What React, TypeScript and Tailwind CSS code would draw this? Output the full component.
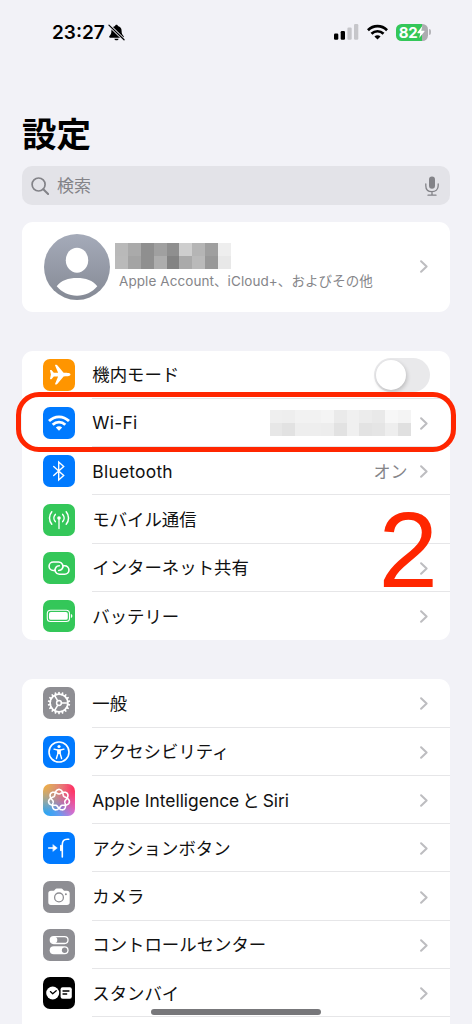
import type { ReactNode } from "react";

const Chevron = () => (
  <svg viewBox="0 0 8 13" className="h-[13px] w-[8px] shrink-0" fill="none" stroke="#bdbdc0" strokeWidth="2" strokeLinecap="round" strokeLinejoin="round">
    <path d="M1.1 1.2 6.6 6.5 1.1 11.8" />
  </svg>
);

const WifiGlyph = ({ className, fill }: { className: string; fill: string }) => (
  <svg viewBox="0 0 22 16" className={className} fill="none" stroke={fill} strokeWidth="2.8">
    <path d="M1 6.1C6.7.4 15.3.4 21 6.1" />
    <path d="M4.7 9.8c3.6-3.5 9-3.5 12.6 0" />
    <path d="M11 15.8 7.8 12.6c1.8-1.7 4.600-1.700 6.400 0Z" fill={fill} stroke="none" />
  </svg>
);

const Tile = ({ color, children }: { color: string; children: ReactNode }) => (
  <div className={`flex size-8 shrink-0 items-center justify-center overflow-hidden rounded-[7px] ${color}`}>{children}</div>
);

const Glyph = ({ children }: { children: ReactNode }) => (
  <svg viewBox="0 0 32 32" className="size-8" fill="none" stroke="white" strokeLinecap="round" strokeLinejoin="round">
    {children}
  </svg>
);

const AirplaneIcon = () => (
  <Tile color="bg-[#ff9500]">
    <Glyph>
      <path
        fill="white"
        stroke="none"
        d="M25.7 14.1c1 .3 1.8.8 1.8 1.5s-.8 1.2-1.8 1.5c-.9.2-2.9.3-5.1.3l-6.1 7.4c-.3.4-.7.6-1.2.6h-.8c-.4 0-.6-.3-.4-.7l3-7.3h-4.3l-2.1 2.5c-.2.3-.5.4-.9.4H7.4c-.3 0-.5-.2-.4-.5l.9-4.2L7 11.4c-.1-.3.1-.5.4-.5h.4c.4 0 .7.1.9.4l2.1 2.5h4.3l-3-7.3c-.2-.4 0-.7.4-.7h.8c.5 0 .9.2 1.2.6l6.1 7.4c2.2 0 4.2.1 5.1.3Z"
      />
    </Glyph>
  </Tile>
);

const WifiIcon = () => (
  <Tile color="bg-[#007aff]">
    <WifiGlyph className="h-[16px] w-[22px]" fill="white" />
  </Tile>
);

const BluetoothIcon = () => (
  <Tile color="bg-[#007aff]">
    <Glyph>
      <path strokeWidth="1.4" strokeLinejoin="miter" d="m10.7 11.4 10 9.2-5 4.4V7l5 4.4-10 9.200" />
    </Glyph>
  </Tile>
);

const AntennaIcon = () => (
  <Tile color="bg-[#34c759]">
    <Glyph>
      <circle cx="16" cy="14" r="1.8" fill="white" stroke="none" />
      <path strokeWidth="1.3" d="M16 15v9.6" />
      <path strokeWidth="1.5" d="M12.3 10.4a5.4 5.4 0 0 0 0 7.2M19.7 10.4a5.4 5.4 0 0 1 0 7.2M8.8 7.7a9.7 9.7 0 0 0 0 12.6M23.2 7.7a9.7 9.7 0 0 1 0 12.6" />
    </Glyph>
  </Tile>
);

const LinkIcon = () => (
  <Tile color="bg-[#34c759]">
    <Glyph>
      <path strokeWidth="1.6" d="M12.1 18.5H10.300a4.25 4.25 0 0 1 0-8.5h5.4a4.25 4.25 0 0 1 3.5 6.7c-.8 1.200-2 1.800-3.500 1.800" />
      <path strokeWidth="1.6" d="M19.9 13.7h1.8a4.25 4.25 0 0 1 0 8.5h-5.4a4.25 4.25 0 0 1-3.5-6.7c.8-1.200 2-1.800 3.500-1.800" />
    </Glyph>
  </Tile>
);

const BatteryIcon = () => (
  <Tile color="bg-[#34c759]">
    <Glyph>
      <rect x="4.3" y="10.3" width="22.2" height="11.2" rx="3.3" strokeWidth="1.1" />
      <rect x="6" y="12" width="18.8" height="7.8" rx="1.9" fill="white" stroke="none" />
      <path d="M27.900 13.900c1.900.5 1.900 3.500 0 4Z" fill="white" stroke="none" />
    </Glyph>
  </Tile>
);

const GEAR_ANGLES = Array.from({ length: 18 }, (_, i) => i * 20);

const GearIcon = () => (
  <Tile color="bg-[#8e8e93]">
    <Glyph>
      <circle cx="16" cy="16" r="8.9" strokeWidth="1.7" />
      {GEAR_ANGLES.map((a) => (
        <path key={a} d="M16 7.200V5.500" strokeWidth="1.7" transform={`rotate(${a} 16 16)`} />
      ))}
      <circle cx="16" cy="16" r="2.4" strokeWidth="1.5" />
      <path strokeWidth="1.5" d="M18.4 16h6.2M14.8 13.900l-3.200-5.400M14.800 18.100l-3.200 5.400" />
    </Glyph>
  </Tile>
);

const AccessibilityIcon = () => (
  <Tile color="bg-[#007aff]">
    <Glyph>
      <circle cx="16" cy="16" r="10" strokeWidth="1.6" />
      <circle cx="16" cy="10.5" r="1.6" fill="white" stroke="none" />
      <path strokeWidth="1.4" d="m11 13.1 3.600.9h2.800l3.600-.9" />
      <path strokeWidth="1.4" d="M14.900 14v3.500l-1.500 5M17.100 14v3.500l1.500 5" />
      <path d="M14.500 14h3v4h-3Z" fill="white" stroke="none" />
    </Glyph>
  </Tile>
);

// Closed seven-lobed knot that winds twice round the centre.
const KNOT_POINTS = Array.from({ length: 224 }, (_, i) => {
  const t = (i / 224) * Math.PI * 4;
  const r = 8.3 + 2.3 * Math.cos(3.5 * t);
  return `${(16 + r * Math.sin(t)).toFixed(2)},${(16 - r * Math.cos(t)).toFixed(2)}`;
}).join(" ");

const IntelligenceIcon = () => (
  <Tile color="bg-[radial-gradient(circle_at_0%_0%,#ffac33_0%,#ffac3300_65%),radial-gradient(circle_at_100%_15%,#ff3158_0%,#ff315800_72%),radial-gradient(circle_at_0%_90%,#27a5f5_0%,#27a5f500_80%),linear-gradient(90deg,#7aa7e8,#e477ee)]">
    <Glyph>
      <polygon points={KNOT_POINTS} strokeWidth="1.6" />
    </Glyph>
  </Tile>
);

const ActionButtonIcon = () => (
  <Tile color="bg-[#007aff]">
    <Glyph>
      <path strokeWidth="1.6" d="M5.700 16h5" />
      <path d="m10.100 12.800 4.200 3.200-4.200 3.200Z" fill="white" strokeWidth=".5" />
      <path strokeWidth="1.6" d="M19.300 25V12.400c0-3.400 1.500-5.200 4.900-5.200h1.600" />
      <path strokeWidth="1.900" d="M18 13.800v4.400" />
    </Glyph>
  </Tile>
);

const CameraIcon = () => (
  <Tile color="bg-[#8e8e93]">
    <Glyph>
      <path
        fill="white"
        stroke="none"
        d="M8 9.700h2.600c.5 0 .8-.2 1.100-.6l.6-.8c.4-.5.8-.7 1.400-.7h4.600c.6 0 1 .2 1.400.7l.6.8c.3.4.6.6 1.100.6H24c1.700 0 2.700 1 2.700 2.700v8.900c0 1.700-1 2.700-2.700 2.700H8c-1.700 0-2.700-1-2.700-2.700v-8.900c0-1.700 1-2.700 2.700-2.700Z"
      />
      <circle cx="16" cy="16.400" r="4.400" stroke="#8e8e93" strokeWidth="1.300" />
      <circle cx="22.900" cy="13.200" r="1" fill="#8e8e93" stroke="none" />
    </Glyph>
  </Tile>
);

const ControlCenterIcon = () => (
  <Tile color="bg-[#8e8e93]">
    <Glyph>
      <rect x="7.300" y="7.600" width="17.700" height="6.900" rx="3.450" strokeWidth="1.300" />
      <circle cx="11" cy="11.050" r="3.300" fill="white" stroke="none" />
      <rect x="6.700" y="17.200" width="18.900" height="8.100" rx="4.050" fill="white" stroke="none" />
      <circle cx="21.600" cy="21.250" r="2.700" fill="#8e8e93" stroke="none" />
    </Glyph>
  </Tile>
);

const StandbyIcon = () => (
  <Tile color="bg-black">
    <Glyph>
      <circle cx="9.700" cy="16" r="6.500" fill="white" stroke="none" />
      <path d="m7.400 14.600 2.300 2.100 3.500-3" stroke="black" strokeWidth="1.300" />
      <rect x="17.600" y="10.300" width="11.200" height="11.400" rx="2" fill="white" stroke="none" />
      <path d="M20 14h6M20 17h3.700" stroke="black" strokeWidth="1.300" />
    </Glyph>
  </Tile>
);

const NAME_MOSAIC = [
  "bg-[#b9b9b9]", "bg-[#aaaaaa]", "bg-[#8f8f8f]", "bg-[#a0a0a0]", "bg-[#8f8f8f]", "bg-[#cecece]", "bg-[#b5b5b5]", "bg-[#9f9f9f]", "bg-[#eeeeee]",
  "bg-[#bababa]", "bg-[#a4a4a4]", "bg-[#8f8f8f]", "bg-[#adadad]", "bg-[#838383]", "bg-[#aaaaaa]", "bg-[#bababa]", "bg-[#989898]", "bg-[#e8e8e8]",
];

const NETWORK_MOSAIC = [
  "bg-[#efefef]", "bg-[#eeeeee]", "bg-[#f2f2f2]", "bg-[#f2f2f2]", "bg-[#f4f4f4]", "bg-[#eaeaea]", "bg-[#f0f0f0]", "bg-[#ececec]", "bg-[#e9e9e9]", "bg-[#f7f7f7]", "bg-[#f4f4f4]",
  "bg-[#e7e7e7]", "bg-[#e2e2e2]", "bg-[#eeeeee]", "bg-[#eeeeee]", "bg-[#ededed]", "bg-[#e2e2e2]", "bg-[#f0f0f0]", "bg-[#e3e3e3]", "bg-[#e5e5e5]", "bg-[#eeeeee]", "bg-[#e0e0e0]",
];

const Toggle = () => (
  <div className="mr-[-2px] flex h-[34px] w-[56px] items-center rounded-full bg-[#e9e9eb] pl-[2px]">
    <div className="size-[30px] rounded-full bg-white shadow-[1px_2px_4px_rgba(0,0,0,0.2)]" />
  </div>
);

type RowProps = { icon: ReactNode; label: ReactNode; tracking?: string; trailing?: ReactNode; last?: boolean };

const Row = ({ icon, label, tracking = "", trailing = <Chevron />, last = false }: RowProps) => (
  <div className="flex h-[48.3px] items-center pl-[21.3px]">
    {icon}
    <div className={`ml-[17px] flex h-full flex-1 items-center justify-between border-b pt-[2px] pr-[22.4px] ${last ? "border-transparent" : "border-[#e6e6e8]"}`}>
      <span className={`text-[17.4px] leading-6 whitespace-nowrap text-[#111] ${tracking}`}>{label}</span>
      {trailing}
    </div>
  </div>
);

export default function App() {
  return (
    <div className="relative h-[1024px] w-[472px] overflow-hidden bg-[#f2f2f7] font-['Inter','Noto_Sans_CJK_JP',sans-serif] text-black">
      <header className="flex h-[64px] items-center justify-between pr-[41px] pl-[52px]">
        <div className="flex items-center gap-[3px] pt-[1px]">
          <span className="text-[19px] leading-6 font-semibold">23:27</span>
          <svg viewBox="0 0 18 18" className="size-[17px]">
            <path d="M9 .8c.9 0 1.500.6 1.500 1.400 2.600.6 3.900 2.500 3.900 5 0 3.300.8 4.200 2 5.600.7.8.4 1.700-.7 1.700H2.300c-1.100 0-1.400-.9-.7-1.700 1.200-1.400 2-2.300 2-5.600 0-2.500 1.300-4.400 3.900-5C7.500 1.400 8.100.8 9 .8ZM6.800 15.500h4.400c-.2 1.100-1 1.800-2.200 1.800s-2-.7-2.200-1.800Z" />
            <path d="m1 1.200 16 15.500" stroke="#f2f2f7" strokeWidth="3" />
            <path d="m1 1.200 16 15.500" stroke="black" strokeWidth="1.300" strokeLinecap="round" />
          </svg>
        </div>
        <div className="flex items-center">
          <svg viewBox="0 0 25 16" className="mr-[8px] h-[16px] w-[25px]">
            <rect x="0" y="9.500" width="4.300" height="6.200" rx="1.200" />
            <rect x="6.700" y="7" width="4.300" height="8.700" rx="1.200" />
            <rect x="13.400" y="3.500" width="4.300" height="12.200" rx="1.200" fill="#c6c6ca" />
            <rect x="20" y="0" width="4.300" height="15.700" rx="1.200" fill="#c6c6ca" />
          </svg>
          <WifiGlyph className="mr-[8px] h-[16px] w-[21px]" fill="black" />
          <div className="flex h-[17px] w-[32px] items-center justify-center rounded-[5.500px] bg-[linear-gradient(90deg,#34c759_82%,#acacb0_82%)]">
            <span className="text-[15px] leading-[17px] font-bold tracking-[-0.3px] text-white">82</span>
            <svg viewBox="0 0 8 12" className="h-[12px] w-[8px]" fill="white">
              <path d="M5.300 0 .4 6.600c-.2.3 0 .6.300.6h2.600L2.200 12l5.300-6.600c.2-.3 0-.6-.3-.6H4.500Z" />
            </svg>
          </div>
          <div className="ml-[1px] h-[6px] w-[2px] rounded-r-full bg-[#b5b5b9]" />
        </div>
      </header>

      <main className="px-[22px]">
        <h1 className="mt-[46px] h-[48px] text-[34.500px] leading-[49px] font-bold">設定</h1>

        <div className="mt-[8px] flex h-[39px] items-center rounded-[10px] bg-[#e3e3e8] pr-[11px] pl-[9px] text-[#838388]">
          <svg viewBox="0 0 18 18" className="size-[18px]" fill="none" stroke="currentColor" strokeWidth="1.700" strokeLinecap="round">
            <circle cx="7.600" cy="7.500" r="6.500" />
            <path d="m12.300 12.200 4.800 4.800" strokeWidth="2" />
          </svg>
          <span className="ml-[8px] flex-1 text-[17px] leading-6">検索</span>
          <svg viewBox="0 0 14 20" className="h-[20px] w-[14px]" fill="none" stroke="currentColor" strokeWidth="1.300" strokeLinecap="round">
            <rect x="4" y=".5" width="6" height="12.300" rx="3" fill="currentColor" stroke="none" />
            <path d="M.8 8v1.800c0 3.600 2.500 5.900 6.200 5.900s6.200-2.300 6.200-5.900V8M7 15.700v3.500M3 19.200h8" />
          </svg>
        </div>

        <section className="mt-[17px] flex h-[89.500px] items-center rounded-[11px] bg-white pr-[22.400px] pl-[22px]">
          <svg viewBox="0 0 66 66" className="size-[66px]">
            <defs>
              <linearGradient id="avatar" x1="0" y1="0" x2="0" y2="1">
                <stop offset="0" stopColor="#a5abb9" />
                <stop offset="1" stopColor="#858a95" />
              </linearGradient>
            </defs>
            <circle cx="33" cy="33" r="33" fill="url(#avatar)" />
            <ellipse cx="33" cy="26.200" rx="11.200" ry="12.500" fill="white" />
            <path d="M12.700 52.300C17 46.500 24.300 44 33 44s16 2.500 20.300 8.300C48.500 58.200 41 61.800 33 61.800s-15.500-3.600-20.300-9.500Z" fill="white" />
          </svg>
          <div className="ml-[5px] flex flex-1 flex-col pt-[1px]">
            <div className="grid h-[26px] w-[116px] grid-cols-9 grid-rows-2">
              {NAME_MOSAIC.map((c, i) => (
                <div key={i} className={c} />
              ))}
            </div>
            <p className="ml-[4px] pt-[2px] text-[13.500px] leading-5 tracking-[0.08px] whitespace-nowrap text-[#858589]">Apple Account、iCloud+、およびその他</p>
          </div>
          <Chevron />
        </section>

        <section className="mt-[39px] rounded-[11px] bg-white">
          <Row icon={<AirplaneIcon />} label="機内モード" trailing={<Toggle />} />
          <Row
            icon={<WifiIcon />}
            label="Wi-Fi"
            tracking="tracking-[0.25px]"
            trailing={
              <div className="flex items-center gap-[9px]">
                <div className="grid h-[26px] w-[141px] grid-cols-11 grid-rows-2">
                  {NETWORK_MOSAIC.map((c, i) => (
                    <div key={i} className={c} />
                  ))}
                </div>
                <Chevron />
              </div>
            }
          />
          <Row
            icon={<BluetoothIcon />}
            label="Bluetooth"
            tracking="tracking-[0.25px]"
            trailing={
              <div className="flex items-center gap-[12px]">
                <span className="text-[17px] leading-6 text-[#858589]">オン</span>
                <Chevron />
              </div>
            }
          />
          <Row icon={<AntennaIcon />} label="モバイル通信" />
          <Row icon={<LinkIcon />} label="インターネット共有" />
          <Row icon={<BatteryIcon />} label="バッテリー" last />
        </section>

        <section className="mt-[39px] rounded-[11px] bg-white">
          <Row icon={<GearIcon />} label="一般" />
          <Row icon={<AccessibilityIcon />} label="アクセシビリティ" />
          <Row
            icon={<IntelligenceIcon />}
            label={
              <>
                Apple Intelligence<span className="mx-[3px]">と</span>Siri
              </>
            }
          />
          <Row icon={<ActionButtonIcon />} label="アクションボタン" />
          <Row icon={<CameraIcon />} label="カメラ" />
          <Row icon={<ControlCenterIcon />} label="コントロールセンター" />
          <Row icon={<StandbyIcon />} label="スタンバイ" />
          <div className="h-5" />
        </section>
      </main>

      <div className="absolute top-[392px] left-[15.500px] h-[60px] w-[440.500px] rounded-[23px] border-[5.500px] border-[#ff2600]" />
      <span className="absolute top-[490px] left-[378.500px] font-['Liberation_Sans',sans-serif] text-[107px] leading-[120px] text-[#ff2600]">2</span>
      <div className="absolute top-[1009px] left-[151px] h-[6px] w-[170px] rounded-full bg-[#77777a]" />
    </div>
  );
}
